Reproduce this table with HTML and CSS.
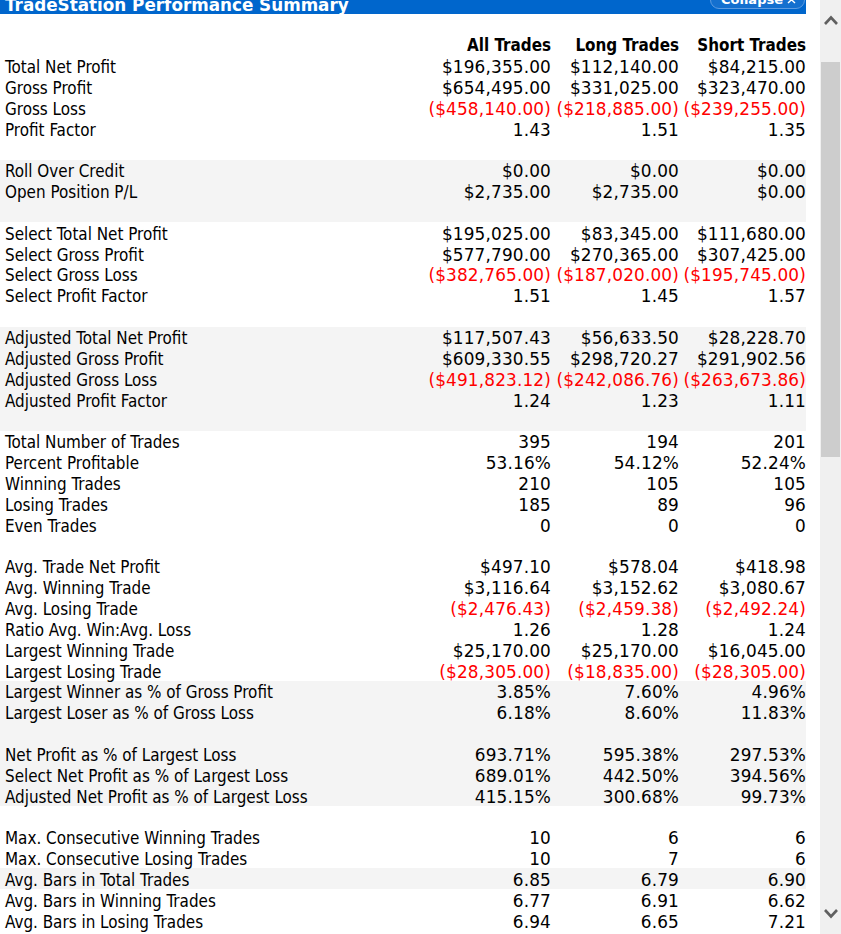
FILE: index.html
```html
<!DOCTYPE html>
<html>
<head>
<meta charset="utf-8">
<link rel="stylesheet" href="styles.css">
</head>
<body>
<div class="screen">
  <div class="page">
    <div class="titlebar">
      <span class="title">TradeStation Performance Summary</span>
      <span class="collapse">Collapse
        <svg class="chev" width="9" height="10" viewBox="0 0 9 10"><path d="M1 5 L4.5 1.8 L8 5 M1 9 L4.5 5.8 L8 9" fill="none" stroke="#fff" stroke-width="1.5"/></svg>
      </span>
    </div>
    <div class="spacer"></div>
    <div class="report">
      <div class="row head"><div class="label"></div><div class="num">All Trades</div><div class="num">Long Trades</div><div class="num">Short Trades</div></div>
      <div class="row"><div class="label">Total Net Profit</div><div class="num">$196,355.00</div><div class="num">$112,140.00</div><div class="num">$84,215.00</div></div>
      <div class="row"><div class="label">Gross Profit</div><div class="num">$654,495.00</div><div class="num">$331,025.00</div><div class="num">$323,470.00</div></div>
      <div class="row"><div class="label">Gross Loss</div><div class="num neg">($458,140.00)</div><div class="num neg">($218,885.00)</div><div class="num neg">($239,255.00)</div></div>
      <div class="row"><div class="label">Profit Factor</div><div class="num">1.43</div><div class="num">1.51</div><div class="num">1.35</div></div>
      <div class="row"></div>
      <div class="row g"><div class="label">Roll Over Credit</div><div class="num">$0.00</div><div class="num">$0.00</div><div class="num">$0.00</div></div>
      <div class="row g"><div class="label">Open Position P/L</div><div class="num">$2,735.00</div><div class="num">$2,735.00</div><div class="num">$0.00</div></div>
      <div class="row g"></div>
      <div class="row"><div class="label">Select Total Net Profit</div><div class="num">$195,025.00</div><div class="num">$83,345.00</div><div class="num">$111,680.00</div></div>
      <div class="row"><div class="label">Select Gross Profit</div><div class="num">$577,790.00</div><div class="num">$270,365.00</div><div class="num">$307,425.00</div></div>
      <div class="row"><div class="label">Select Gross Loss</div><div class="num neg">($382,765.00)</div><div class="num neg">($187,020.00)</div><div class="num neg">($195,745.00)</div></div>
      <div class="row"><div class="label">Select Profit Factor</div><div class="num">1.51</div><div class="num">1.45</div><div class="num">1.57</div></div>
      <div class="row"></div>
      <div class="row g"><div class="label">Adjusted Total Net Profit</div><div class="num">$117,507.43</div><div class="num">$56,633.50</div><div class="num">$28,228.70</div></div>
      <div class="row g"><div class="label">Adjusted Gross Profit</div><div class="num">$609,330.55</div><div class="num">$298,720.27</div><div class="num">$291,902.56</div></div>
      <div class="row g"><div class="label">Adjusted Gross Loss</div><div class="num neg">($491,823.12)</div><div class="num neg">($242,086.76)</div><div class="num neg">($263,673.86)</div></div>
      <div class="row g"><div class="label">Adjusted Profit Factor</div><div class="num">1.24</div><div class="num">1.23</div><div class="num">1.11</div></div>
      <div class="row g"></div>
      <div class="row"><div class="label">Total Number of Trades</div><div class="num">395</div><div class="num">194</div><div class="num">201</div></div>
      <div class="row"><div class="label">Percent Profitable</div><div class="num">53.16%</div><div class="num">54.12%</div><div class="num">52.24%</div></div>
      <div class="row"><div class="label">Winning Trades</div><div class="num">210</div><div class="num">105</div><div class="num">105</div></div>
      <div class="row"><div class="label">Losing Trades</div><div class="num">185</div><div class="num">89</div><div class="num">96</div></div>
      <div class="row"><div class="label">Even Trades</div><div class="num">0</div><div class="num">0</div><div class="num">0</div></div>
      <div class="row"></div>
      <div class="row"><div class="label">Avg. Trade Net Profit</div><div class="num">$497.10</div><div class="num">$578.04</div><div class="num">$418.98</div></div>
      <div class="row"><div class="label">Avg. Winning Trade</div><div class="num">$3,116.64</div><div class="num">$3,152.62</div><div class="num">$3,080.67</div></div>
      <div class="row"><div class="label">Avg. Losing Trade</div><div class="num neg">($2,476.43)</div><div class="num neg">($2,459.38)</div><div class="num neg">($2,492.24)</div></div>
      <div class="row"><div class="label">Ratio Avg. Win:Avg. Loss</div><div class="num">1.26</div><div class="num">1.28</div><div class="num">1.24</div></div>
      <div class="row"><div class="label">Largest Winning Trade</div><div class="num">$25,170.00</div><div class="num">$25,170.00</div><div class="num">$16,045.00</div></div>
      <div class="row"><div class="label">Largest Losing Trade</div><div class="num neg">($28,305.00)</div><div class="num neg">($18,835.00)</div><div class="num neg">($28,305.00)</div></div>
      <div class="row g"><div class="label">Largest Winner as % of Gross Profit</div><div class="num">3.85%</div><div class="num">7.60%</div><div class="num">4.96%</div></div>
      <div class="row g"><div class="label">Largest Loser as % of Gross Loss</div><div class="num">6.18%</div><div class="num">8.60%</div><div class="num">11.83%</div></div>
      <div class="row g"></div>
      <div class="row g"><div class="label">Net Profit as % of Largest Loss</div><div class="num">693.71%</div><div class="num">595.38%</div><div class="num">297.53%</div></div>
      <div class="row g"><div class="label">Select Net Profit as % of Largest Loss</div><div class="num">689.01%</div><div class="num">442.50%</div><div class="num">394.56%</div></div>
      <div class="row g"><div class="label">Adjusted Net Profit as % of Largest Loss</div><div class="num">415.15%</div><div class="num">300.68%</div><div class="num">99.73%</div></div>
      <div class="row"></div>
      <div class="row"><div class="label">Max. Consecutive Winning Trades</div><div class="num">10</div><div class="num">6</div><div class="num">6</div></div>
      <div class="row"><div class="label">Max. Consecutive Losing Trades</div><div class="num">10</div><div class="num">7</div><div class="num">6</div></div>
      <div class="row g"><div class="label">Avg. Bars in Total Trades</div><div class="num">6.85</div><div class="num">6.79</div><div class="num">6.90</div></div>
      <div class="row"><div class="label">Avg. Bars in Winning Trades</div><div class="num">6.77</div><div class="num">6.91</div><div class="num">6.62</div></div>
      <div class="row"><div class="label">Avg. Bars in Losing Trades</div><div class="num">6.94</div><div class="num">6.65</div><div class="num">7.21</div></div>
    </div>
  </div>
  <div class="scrollbar">
    <div class="sb-btn">
      <svg width="16" height="12" viewBox="0 0 16 12"><path d="M2 10 L8 3.5 L14 10" fill="none" stroke="#606060" stroke-width="2.6"/></svg>
    </div>
    <div class="sb-track">
      <div class="sb-thumb"></div>
    </div>
    <div class="sb-btn down">
      <svg width="16" height="12" viewBox="0 0 16 12"><path d="M2 2 L8 8.5 L14 2" fill="none" stroke="#606060" stroke-width="2.6"/></svg>
    </div>
  </div>
</div>
</body>
</html>
```
FILE: styles.css
```css
html, body {
  margin: 0;
  padding: 0;
  background: #fff;
}
.screen {
  display: flex;
  width: 841px;
  height: 934px;
  overflow: hidden;
}
.page {
  width: 820px;
  flex: none;
}
.titlebar {
  width: 806px;
  height: 14px;
  background: #0066cc;
  display: flex;
  align-items: flex-end;
  justify-content: space-between;
  overflow: hidden;
}
.title {
  font-family: "DejaVu Sans", Verdana, sans-serif;
  font-weight: bold;
  font-size: 16.8px;
  line-height: 17px;
  color: #fff;
  padding-left: 5px;
  white-space: nowrap;
}
.collapse {
  display: flex;
  align-items: center;
  gap: 4px;
  height: 18px;
  margin-bottom: 5px;
  margin-right: 1px;
  padding: 0 8px 2px 10px;
  border: 1px solid #5d9be0;
  border-radius: 10px;
  background: #1470cf;
  color: #fff;
  font-family: "DejaVu Sans", Verdana, sans-serif;
  font-weight: bold;
  font-size: 13px;
  box-sizing: border-box;
}
.chev {
  display: block;
}
.spacer {
  height: 20.7px;
}
.report {
  width: 806px;
}
.row {
  display: grid;
  grid-template-columns: 423px 128px 128px 127px;
  height: 20.857px;
  line-height: 20.857px;
  color: #000;
}
.row.g {
  background: #f4f4f4;
}
.label {
  font-family: "DejaVu Sans Condensed", Tahoma, sans-serif;
  font-size: 16.9px;
  padding-left: 5px;
  padding-top: 1.5px;
  white-space: nowrap;
}
.num {
  font-family: "DejaVu Sans", Verdana, sans-serif;
  font-size: 16.9px;
  letter-spacing: 0.15px;
  padding-top: 1.5px;
  text-align: right;
  white-space: nowrap;
}
.num.neg {
  color: #ff0000;
}
.head .num {
  font-family: "DejaVu Sans Condensed", Tahoma, sans-serif;
  font-weight: bold;
  letter-spacing: 0;
  padding-top: 0;
}
.scrollbar {
  width: 21px;
  flex: none;
  background: #f0f0f0;
  display: flex;
  flex-direction: column;
}
.sb-btn {
  height: 40px;
  display: flex;
  justify-content: center;
  align-items: center;
}
.sb-track {
  flex: 1;
  padding-top: 22px;
}
.sb-thumb {
  margin: 0 1px;
  height: 395px;
  background: #cdcdcd;
}
```
